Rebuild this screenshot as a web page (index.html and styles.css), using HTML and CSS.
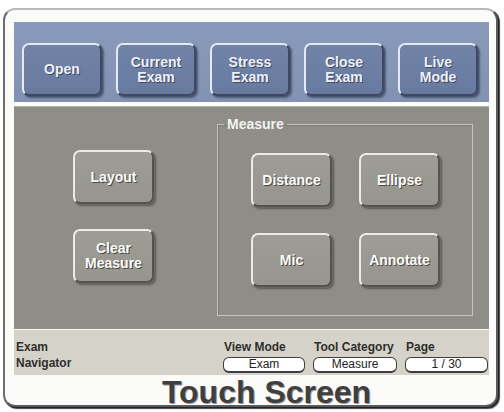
FILE: index.html
```html
<!DOCTYPE html>
<html lang="en">
<head>
    <meta charset="UTF-8">
    <title>Touch Screen</title>
    <link rel="stylesheet" href="styles.css">
</head>
<body>
    <div class="frame">
        <div class="toolbar">
            <button class="btn btn-blue">Open</button>
            <button class="btn btn-blue">Current<br>Exam</button>
            <button class="btn btn-blue">Stress<br>Exam</button>
            <button class="btn btn-blue">Close<br>Exam</button>
            <button class="btn btn-blue">Live<br>Mode</button>
        </div>

        <div class="workspace">
            <div class="side-tools">
                <button class="btn btn-gray">Layout</button>
                <button class="btn btn-gray">Clear<br>Measure</button>
            </div>

            <fieldset class="measure-group">
                <legend>Measure</legend>
                <div class="measure-grid">
                    <button class="btn btn-gray">Distance</button>
                    <button class="btn btn-gray">Ellipse</button>
                    <button class="btn btn-gray">Mic</button>
                    <button class="btn btn-gray">Annotate</button>
                </div>
            </fieldset>
        </div>

        <div class="status-bar">
            <div class="status-title">Exam<br>Navigator</div>
            <div class="status-field">
                <span class="field-label">View Mode</span>
                <div class="field-box">Exam</div>
            </div>
            <div class="status-field">
                <span class="field-label">Tool Category</span>
                <div class="field-box">Measure</div>
            </div>
            <div class="status-field">
                <span class="field-label">Page</span>
                <div class="field-box">1 / 30</div>
            </div>
        </div>

        <div class="footer">Touch Screen</div>
    </div>
</body>
</html>
```

FILE: styles.css
```css
* {
    margin: 0;
    padding: 0;
    box-sizing: border-box;
}

body {
    font-family: 'Liberation Sans', Arial, sans-serif;
    background: #ffffff;
    width: 504px;
    height: 412px;
    overflow: hidden;
}

/* outer white casing */
.frame {
    margin: 8px 0 0 3px;
    width: 495px;
    height: 399px;
    background: #fbfbfa;
    border: 2px solid #5a5a5a;
    border-top-color: #b8b8b8;
    border-left-color: #6e6e6e;
    border-radius: 12px;
    box-shadow: 1px 1px 0 #222, 2px 2px 1px #444;
    padding: 12px 7px 0 9px;
}

/* shared button look */
.btn {
    width: 80px;
    height: 53px;
    border-radius: 7px;
    border: 2px solid;
    font-family: 'Liberation Sans', Arial, sans-serif;
    font-size: 14px;
    font-weight: bold;
    line-height: 15px;
    cursor: pointer;
}

.btn-blue {
    background: linear-gradient(#7283a8, #687a9f);
    color: #eef1f7;
    border-color: #e4e9f2 #3e4862 #3e4862 #e4e9f2;
    box-shadow: 1px 1px 0 #4b5673, 2px 2px 2px rgba(30, 40, 60, 0.5);
    text-shadow: 1px 1px 0 rgba(40, 50, 75, 0.7);
}

.btn-gray {
    width: 81px;
    height: 54px;
    background: linear-gradient(#9d9c95, #96958e);
    color: #fbfbf8;
    border-color: #ecebe6 #54534e #54534e #ecebe6;
    box-shadow: 1px 1px 0 #6a6964, 2px 2px 2px rgba(40, 40, 35, 0.5);
    text-shadow: 1px 1px 0 #4a4944;
}

/* top blue toolbar */
.toolbar {
    height: 80px;
    background: linear-gradient(#8a9aba, #8292b3);
    display: flex;
    gap: 14px;
    padding: 21px 8px 0 8px;
    margin-bottom: 4px;
}

/* grey work area */
.workspace {
    height: 223px;
    background: #8e8d87;
    border-top: 1px solid #b4b3ad;
    display: flex;
    margin-bottom: 1px;
}

.side-tools {
    display: flex;
    flex-direction: column;
    gap: 25px;
    padding: 43px 0 0 59px;
}

.measure-group {
    margin: 10px 0 0 63px;
    width: 256px;
    height: 199px;
    border: 1px solid #c4c3bd;
    box-shadow: inset 1px 1px 0 #7c7b76;
    padding: 22px 0 0 0;
}

.measure-group legend {
    margin-left: 6px;
    padding: 0 3px;
    font-size: 14px;
    font-weight: bold;
    line-height: 14px;
    color: #f4f4f0;
}

.measure-grid {
    display: grid;
    grid-template-columns: 81px 81px;
    column-gap: 27px;
    row-gap: 26px;
    padding-left: 33px;
}

/* bottom status strip */
.status-bar {
    height: 45px;
    background: #d5d3c9;
    display: grid;
    grid-template-columns: 1fr 82px 84px 83px;
    column-gap: 8px;
    padding: 9px 1px 0 2px;
    font-size: 12px;
    line-height: 16px;
    color: #2e2e2e;
}

.status-title {
    font-weight: bold;
}

.field-label {
    display: block;
    font-weight: bold;
    padding-left: 1px;
    white-space: nowrap;
}

.field-box {
    margin-top: 2px;
    height: 16px;
    background: #ffffff;
    border: 1px solid #3e3e3e;
    border-bottom-width: 2px;
    border-radius: 6px;
    text-align: center;
    font-size: 12px;
    line-height: 13px;
    color: #222;
}

.footer {
    height: 30px;
    line-height: 34px;
    text-align: center;
    padding-left: 30px;
    font-size: 32px;
    font-weight: bold;
    color: #3f3f3f;
    text-shadow: 1px 1px 0 #9a9a9a;
}
```
